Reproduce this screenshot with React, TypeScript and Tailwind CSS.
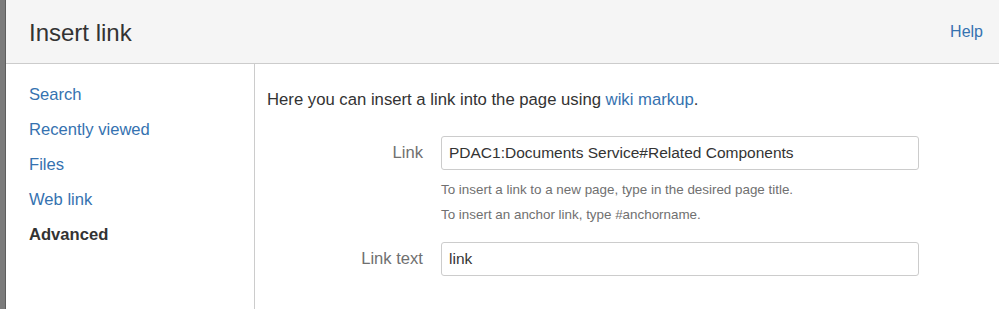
export default function App() {
  const navItems = ['Search', 'Recently viewed', 'Files', 'Web link'];

  return (
    <div className="flex h-[309px] w-[999px] overflow-hidden bg-white font-['Liberation_Sans',Arial,sans-serif]">
      {/* page behind the dialog */}
      <div className="w-[6px] shrink-0 border-r border-[#5e5e5e] bg-[#7b7b7b]" />

      <div className="flex flex-1 flex-col">
        {/* Header */}
        <div className="flex h-[64px] shrink-0 items-center justify-between border-b border-[#cccccc] bg-[#f5f5f5] pl-[23px] pr-[16px]">
          <h1 className="pt-[2px] text-[24px] text-[#333333]">Insert link</h1>
          <a href="#" className="text-[16px] text-[#3572b0]">Help</a>
        </div>

        <div className="flex flex-1">
          {/* Sidebar */}
          <div className="w-[249px] shrink-0 border-r border-[#cccccc] pl-[23px] pt-[13px]">
            {navItems.map((item) => (
              <a key={item} href="#" className="block text-[16.6px] leading-[35px] text-[#3572b0]">
                {item}
              </a>
            ))}
            <div className="text-[16.6px] font-bold leading-[35px] text-[#333333]">Advanced</div>
          </div>

          {/* Main */}
          <div className="flex-1 pl-[12px] pt-[26px]">
            <p className="text-[16.7px] leading-[20px] text-[#333333]">
              Here you can insert a link into the page using{' '}
              <a href="#" className="text-[#3572b0]">wiki markup</a>.
            </p>

            <div className="mt-[26px] grid grid-cols-[156px_478px] gap-x-[18px]">
              <label className="self-center text-right text-[16.6px] text-[#707070]">Link</label>
              <div className="flex h-[34px] items-center rounded-[3px] border border-[#cccccc] px-[7px] text-[15.5px] text-[#333333]">
                PDAC1:Documents Service#Related Components
              </div>

              <div />
              <div className="mt-[7px] text-[13.4px] leading-[25px] text-[#707070]">
                <div>To insert a link to a new page, type in the desired page title.</div>
                <div>To insert an anchor link, type #anchorname.</div>
              </div>

              <label className="mt-[15px] self-center text-right text-[16.6px] text-[#707070]">Link text</label>
              <div className="mt-[15px] flex h-[34px] items-center rounded-[3px] border border-[#cccccc] px-[7px] text-[15.5px] text-[#333333]">
                link
              </div>
            </div>
          </div>
        </div>
      </div>
    </div>
  );
}
